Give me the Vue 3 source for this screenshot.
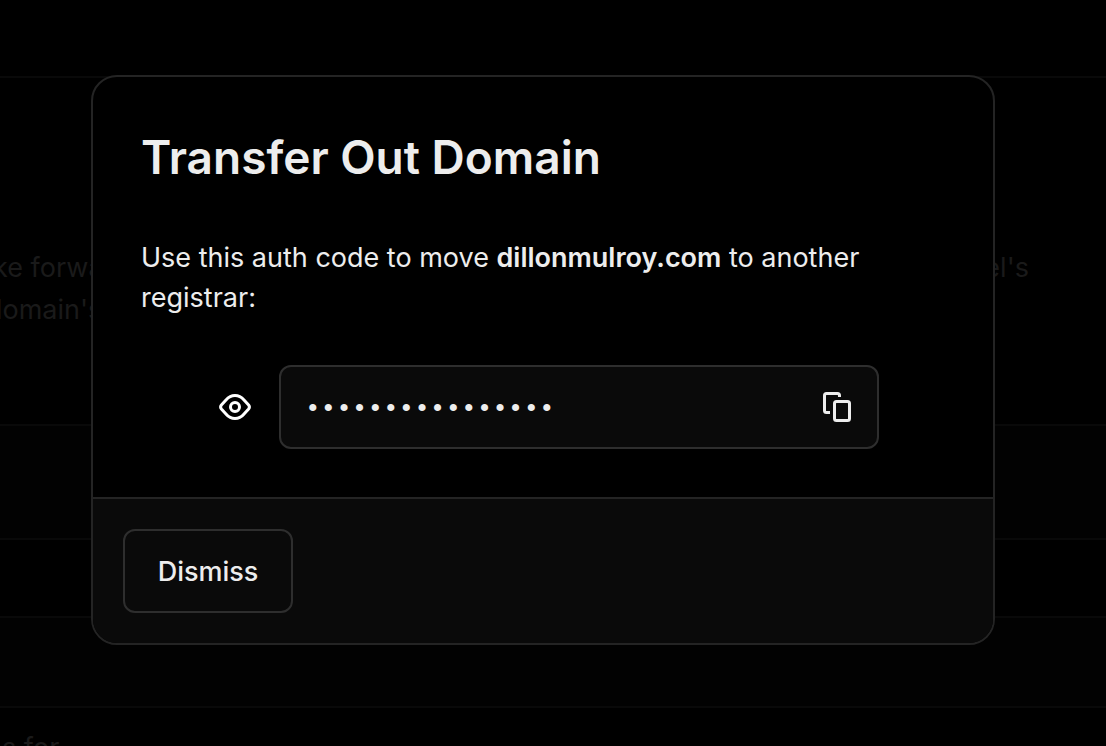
<script setup>
import { ref } from 'vue'

const domain = 'dillonmulroy.com'
const authCode = ref('a8Kd93mfQz71LpXw')
const revealed = ref(false)
const open = ref(true)

function copy() {
  navigator.clipboard?.writeText(authCode.value)
}
</script>

<template>
  <div class="page">
    <main class="backdrop">
      <section class="strip top"></section>
      <section class="strip notice">
        <p class="notice-text">
          <span class="split"><span class="indent">ke forwa</span><span>el's</span></span>
          <span class="split">domain's</span>
        </p>
      </section>
      <section class="strip tinted foot"></section>
      <section class="strip gap"></section>
      <section class="strip tinted row"></section>
      <section class="strip last"><p class="last-text">s for</p></section>
    </main>

    <div v-if="open" class="overlay">
      <div class="modal" role="dialog" aria-modal="true" aria-labelledby="title">
        <div class="body">
          <h1 id="title">Transfer Out Domain</h1>
          <p class="lead">
            Use this auth code to move <strong>{{ domain }}</strong> to another registrar:
          </p>
          <div class="code-row">
            <button class="icon-button" type="button" aria-label="Show auth code" @click="revealed = !revealed">
              <svg width="32" height="32" viewBox="0 0 32 32" fill="none" stroke="currentColor" stroke-width="3">
                <path d="M7.2 8.8C12 3.1 20 3.1 24.8 8.8L29.6 14Q31.2 16 29.6 18L24.8 23.2C20 28.9 12 28.9 7.2 23.2L2.4 18Q0.8 16 2.4 14Z" stroke-linejoin="round" />
                <circle cx="16" cy="16" r="4.5" />
              </svg>
            </button>
            <div class="field">
              <input
                v-model="authCode"
                :type="revealed ? 'text' : 'password'"
                aria-label="Auth code"
                readonly
              />
              <button class="copy" type="button" aria-label="Copy auth code" @click="copy">
                <svg width="32" height="32" viewBox="0 0 32 32" fill="none" stroke="currentColor" stroke-width="3">
                  <path d="M9 21.5H5.5Q3.5 21.5 3.5 19.5V4.5Q3.5 2.5 5.5 2.5H16.5Q18.5 2.5 18.5 4.5V6" />
                  <rect x="13.5" y="10.5" width="15" height="19" rx="2" />
                </svg>
              </button>
            </div>
          </div>
        </div>
        <footer>
          <button class="dismiss" type="button" @click="open = false">Dismiss</button>
        </footer>
      </div>
    </div>
  </div>
</template>

<style>
body {
  margin: 0;
  background: #000;
}
</style>

<style scoped>
* {
  box-sizing: border-box;
}

.page {
  position: relative;
  min-height: 100vh;
  overflow: hidden;
  background: #000;
  color: #ededed;
  font-family: Inter, "Liberation Sans", sans-serif;
  font-size: 27px;
}

.backdrop {
  height: 100vh;
  display: flex;
  flex-direction: column;
  overflow: hidden;
  color: #1a1a1a;
}

.strip {
  flex: none;
  border-bottom: 2px solid #090909;
}

.tinted {
  background: #020202;
}

.top {
  height: 78px;
}

.notice {
  height: 348px;
  padding-top: 169px;
}

.foot {
  height: 114px;
}

.gap {
  height: 78px;
}

.row {
  height: 90px;
}

.last {
  border-bottom: 0;
  padding-top: 20px;
}

p {
  margin: 0;
}

.notice-text {
  margin-left: -14px;
  padding-right: 77px;
  line-height: 42px;
}

.split {
  display: flex;
  justify-content: space-between;
}

.indent {
  padding-left: 7px;
}

.last-text {
  padding-left: 2px;
  line-height: 40px;
}

.overlay {
  position: absolute;
  inset: 0;
  padding: 75px 111px 75px 91px;
}

.modal {
  border: 2px solid #242424;
  border-radius: 26px;
  overflow: hidden;
  background: #000;
}

.body {
  padding: 48px;
}

h1 {
  margin: 0 0 49px;
  font-size: 46px;
  font-weight: 600;
  line-height: 64px;
}

.lead {
  margin-bottom: 47px;
  line-height: 40px;
}

strong {
  font-weight: 600;
}

.code-row {
  display: flex;
  align-items: center;
  justify-content: center;
  gap: 16px;
}

button {
  color: inherit;
  font: inherit;
  cursor: pointer;
}

svg {
  display: block;
}

.icon-button,
.copy {
  flex: none;
  padding: 12px;
  border: 0;
  background: none;
}

.icon-button {
  color: #fff;
}

.field {
  display: flex;
  align-items: center;
  flex: 0 1 600px;
  min-width: 0;
  height: 84px;
  padding: 0 12px 0 24px;
  border: 2px solid #2e2e2e;
  border-radius: 12px;
  background: #0a0a0a;
}

input {
  flex: 1;
  min-width: 0;
  padding: 4px 0 0;
  border: 0;
  outline: 0;
  background: none;
  color: inherit;
  font-family: "Liberation Mono", monospace;
  font-size: 26px;
  line-height: 40px;
}

footer {
  padding: 30px;
  border-top: 2px solid #242424;
  background: #0a0a0a;
}

.dismiss {
  min-width: 170px;
  height: 84px;
  padding: 0 32px;
  border: 2px solid #2e2e2e;
  border-radius: 12px;
  background: #0a0a0a;
  font-weight: 500;
}
</style>
